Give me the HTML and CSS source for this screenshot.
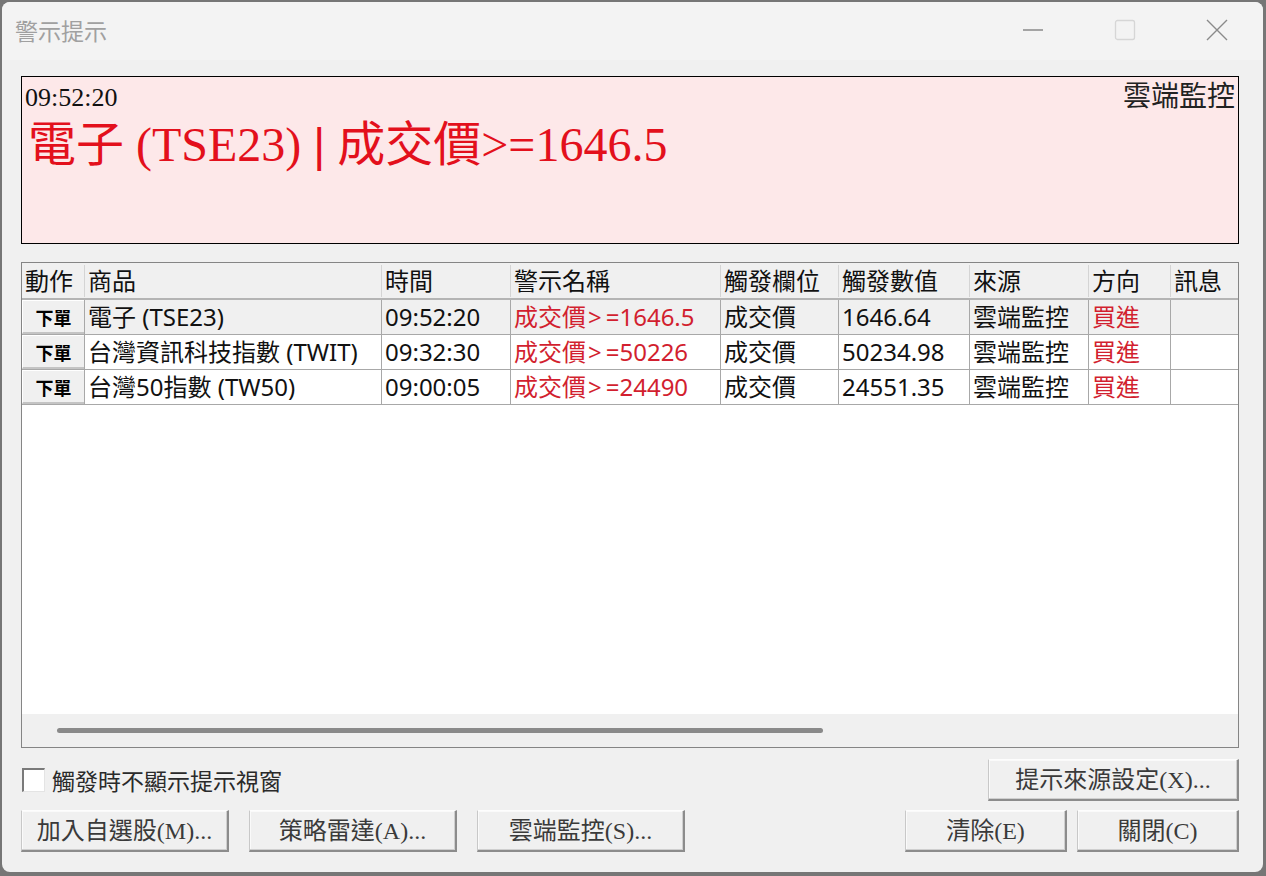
FILE: index.html
```html
<!DOCTYPE html>
<html lang="zh-Hant">
<head>
<meta charset="utf-8">
<title>警示提示</title>
<link rel="stylesheet" href="styles.css">
</head>
<body>
<div class="window">
  <div class="titlebar">
    <div class="title">警示提示</div>
    <div class="controls">
      <span class="ctl">
        <svg width="22" height="22" viewBox="0 0 22 22"><line x1="1" y1="11" x2="21" y2="11" stroke="#8a8a8a" stroke-width="1.3"/></svg>
      </span>
      <span class="ctl">
        <svg width="22" height="22" viewBox="0 0 22 22"><rect x="1.5" y="1.5" width="19" height="19" rx="2" fill="none" stroke="#d6d6d6" stroke-width="1.3"/></svg>
      </span>
      <span class="ctl">
        <svg width="22" height="22" viewBox="0 0 22 22"><path d="M1 1 L21 21 M21 1 L1 21" stroke="#8a8a8a" stroke-width="1.4" fill="none"/></svg>
      </span>
    </div>
  </div>

  <div class="content">
    <div class="alert">
      <div class="alert-top">
        <span class="alert-time">09:52:20</span>
        <span class="alert-src">雲端監控</span>
      </div>
      <div class="alert-msg">電子 (TSE23) <span class="bar">|</span> 成交價&gt;=1646.5</div>
    </div>

    <div class="grid">
      <div class="row head">
        <div class="cell">動作</div>
        <div class="cell">商品</div>
        <div class="cell">時間</div>
        <div class="cell">警示名稱</div>
        <div class="cell">觸發欄位</div>
        <div class="cell">觸發數值</div>
        <div class="cell">來源</div>
        <div class="cell">方向</div>
        <div class="cell">訊息</div>
      </div>
      <div class="row sel">
        <div class="cell act"><span class="order">下單</span></div>
        <div class="cell">電子 (TSE23)</div>
        <div class="cell">09:52:20</div>
        <div class="cell red">成交價<span class="op">&gt;</span>=1646.5</div>
        <div class="cell">成交價</div>
        <div class="cell">1646.64</div>
        <div class="cell">雲端監控</div>
        <div class="cell red">買進</div>
        <div class="cell"></div>
      </div>
      <div class="row">
        <div class="cell act"><span class="order">下單</span></div>
        <div class="cell">台灣資訊科技指數 (TWIT)</div>
        <div class="cell">09:32:30</div>
        <div class="cell red">成交價<span class="op">&gt;</span>=50226</div>
        <div class="cell">成交價</div>
        <div class="cell">50234.98</div>
        <div class="cell">雲端監控</div>
        <div class="cell red">買進</div>
        <div class="cell"></div>
      </div>
      <div class="row">
        <div class="cell act"><span class="order">下單</span></div>
        <div class="cell">台灣50指數 (TW50)</div>
        <div class="cell">09:00:05</div>
        <div class="cell red">成交價<span class="op">&gt;</span>=24490</div>
        <div class="cell">成交價</div>
        <div class="cell">24551.35</div>
        <div class="cell">雲端監控</div>
        <div class="cell red">買進</div>
        <div class="cell"></div>
      </div>
      <div class="empty"></div>
      <div class="hscroll"><div class="thumb"></div></div>
    </div>

    <div class="opts">
      <label class="check"><span class="box"></span><span class="check-label">觸發時不顯示提示視窗</span></label>
      <button class="btn wide">提示來源設定(X)...</button>
    </div>

    <div class="actions">
      <button class="btn">加入自選股(M)...</button>
      <button class="btn">策略雷達(A)...</button>
      <button class="btn">雲端監控(S)...</button>
      <span class="spacer"></span>
      <button class="btn small">清除(E)</button>
      <button class="btn small">關閉(C)</button>
    </div>
  </div>
</div>
</body>
</html>
```

FILE: styles.css
```css
* { box-sizing: border-box; }

html, body {
  margin: 0;
  padding: 0;
}

body {
  width: 1266px;
  height: 876px;
  background: #767676;
  overflow: hidden;
  padding: 2px 3px 4px 2px;
}

.window {
  width: 1261px;
  height: 870px;
  background: #f0f0f0;
  border-radius: 8px;
  overflow: hidden;
  display: flex;
  flex-direction: column;
}

.titlebar {
  height: 58px;
  flex: none;
  background: #f3f3f3;
  display: flex;
  align-items: center;
  justify-content: space-between;
}

.title {
  padding-left: 13px;
  font-family: "Noto Sans CJK TC", sans-serif;
  font-size: 23px;
  color: #a0a0a0;
  line-height: 1;
  margin-top: -2px;
}

.controls {
  display: flex;
  height: 100%;
}

.ctl {
  width: 92px;
  display: flex;
  align-items: center;
  justify-content: center;
  margin-top: -2px;
}

.content {
  flex: 1;
  display: flex;
  flex-direction: column;
  padding: 16px 24px 0 19px;
}

/* Alert banner */
.alert {
  height: 168px;
  flex: none;
  border: 1px solid #000;
  background: #fde8e9;
  padding: 5px 3px 0 3px;
  font-family: "Liberation Serif", "Noto Sans CJK TC", serif;
}

.alert-top {
  display: flex;
  justify-content: space-between;
  align-items: baseline;
  line-height: 30px;
  color: #111;
}

.alert-time { font-size: 26px; }

.alert-src {
  font-size: 28px;
  color: #222;
}

.alert-msg {
  font-size: 48px;
  line-height: 56px;
  color: #e3101c;
  padding-left: 3px;
  margin-top: 4px;
}

.bar {
  font-family: "Liberation Sans", sans-serif;
  font-size: 46px;
}

/* Grid */
.grid {
  margin-top: 18px;
  height: 486px;
  flex: none;
  border: 1px solid #858585;
  background: #fff;
  display: flex;
  flex-direction: column;
  font-family: "Noto Sans", "Noto Sans CJK TC", sans-serif;
  font-size: 24px;
  color: #111;
}

.row {
  display: grid;
  grid-template-columns: 62px 297px 129px 210px 118px 131px 119px 82px 1fr;
  height: 35px;
  flex: none;
  border-bottom: 1px solid #a8a8a8;
}

.row .cell {
  border-left: 1px solid #a8a8a8;
  padding-left: 3px;
  line-height: 34px;
  white-space: nowrap;
  overflow: hidden;
}

.row .cell:first-child { border-left: none; }

.head {
  height: 37px;
  background: #f0f0f0;
  border-bottom: 2px solid #b4b4b4;
}

.head .cell {
  border-left: 1px solid #d4d4d4;
  margin: 2px 0 1px;
  line-height: 32px;
  color: #111;
}

.sel { background: #f0f0f0; }

.red { color: #d21f2f; }

.op { margin-right: 4px; margin-left: 2px; }

.cell.act {
  padding: 0;
  display: flex;
}

.order {
  flex: 1;
  background: #f0f0f0;
  border-top: 1px solid #fff;
  border-left: 1px solid #fff;
  border-bottom: 2px solid #c4c4c4;
  display: flex;
  align-items: center;
  justify-content: center;
  font-family: "Noto Sans CJK TC", sans-serif;
  font-size: 18px;
  font-weight: 700;
  color: #000;
  line-height: 1;
}

.empty { flex: 1; }

.hscroll {
  height: 33px;
  flex: none;
  background: #f0f0f0;
  display: flex;
  align-items: center;
  padding-left: 35px;
}

.thumb {
  width: 766px;
  height: 5px;
  border-radius: 3px;
  background: #8a8a8a;
}

/* Options row */
.opts {
  margin-top: 11px;
  display: flex;
  justify-content: space-between;
  align-items: center;
}

.check {
  display: flex;
  align-items: center;
  gap: 7px;
  padding-left: 1px;
}

.box {
  width: 23px;
  height: 24px;
  background: #fff;
  border-top: 2px solid #7a7a7a;
  border-left: 2px solid #7a7a7a;
  border-right: 1px solid #e4e4e4;
  border-bottom: 1px solid #e4e4e4;
}

.check-label {
  font-family: "Noto Sans CJK TC", sans-serif;
  font-size: 23px;
  color: #2a2a2a;
  line-height: 1;
}

.btn {
  height: 42px;
  width: 208px;
  background: #f0f0f0;
  border-top: 1px solid #fdfdfd;
  border-left: 1px solid #c8c8c8;
  border-right: 2px solid #8c8c8c;
  border-bottom: 2px solid #8c8c8c;
  box-shadow: inset -1px -1px 0 #cfcfcf, inset 1px 1px 0 #fafafa;
  font-family: "Liberation Serif", "Noto Sans CJK TC", serif;
  font-size: 24px;
  color: #3a3a3a;
  padding: 0;
  margin: 0;
  line-height: 1;
}

.btn.wide { width: 251px; }
.btn.small { width: 162px; }

.actions {
  margin-top: 9px;
  display: flex;
  align-items: center;
}

.actions .btn + .btn { margin-left: 20px; }
.actions .btn.small + .btn.small { margin-left: 10px; }

.spacer { flex: 1; }
```
